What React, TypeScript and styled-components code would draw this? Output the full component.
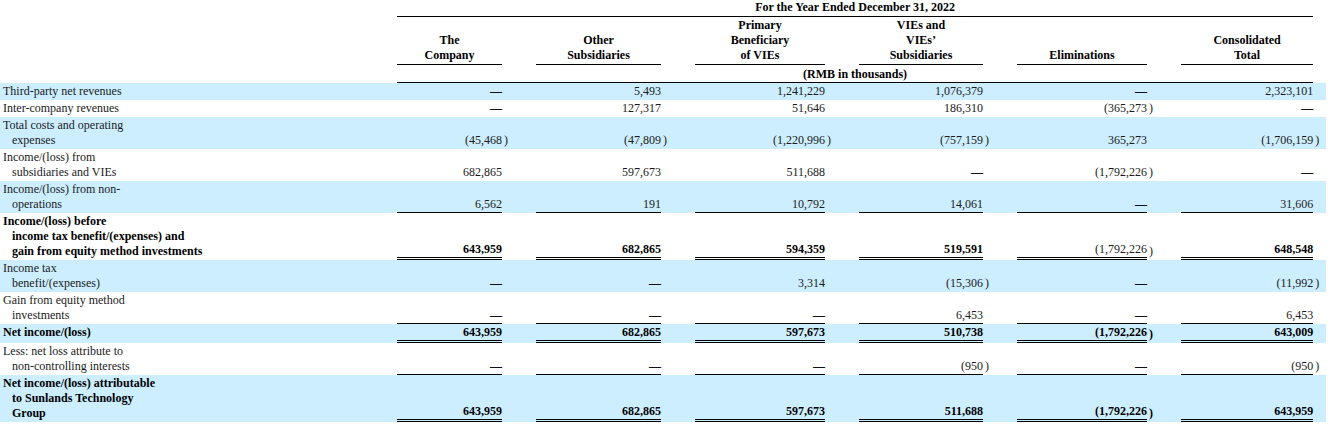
import React from 'react';
import styled, { createGlobalStyle } from 'styled-components';

const GlobalStyle = createGlobalStyle`
  html, body { margin: 0; padding: 0; background: #ffffff; }
  body {
    font-family: "Liberation Serif", "Times New Roman", serif;
    font-size: 12px;
    color: #1a1a1a;
  }
`;

type Rule = 'none' | 'single' | 'double';

interface LineItem {
  label: string[];
  values: string[];
  bold?: boolean;
  plainAt?: number[];
  rule?: Rule;
}

const columns = [
  { title: ['The', 'Company'], width: 105 },
  { title: ['Other', 'Subsidiaries'], width: 125 },
  { title: ['Primary', 'Beneficiary', 'of VIEs'], width: 130 },
  { title: ['VIEs and', 'VIEs\u2019', 'Subsidiaries'], width: 124 },
  { title: ['Eliminations'], width: 130 },
  { title: ['Consolidated', 'Total'], width: 132 },
];

const items: LineItem[] = [
  { label: ['Third-party net revenues'], values: ['—', '5,493', '1,241,229', '1,076,379', '—', '2,323,101'] },
  { label: ['Inter-company revenues'], values: ['—', '127,317', '51,646', '186,310', '(365,273)', '—'] },
  { label: ['Total costs and operating', 'expenses'], values: ['(45,468)', '(47,809)', '(1,220,996)', '(757,159)', '365,273', '(1,706,159)'] },
  { label: ['Income/(loss) from', 'subsidiaries and VIEs'], values: ['682,865', '597,673', '511,688', '—', '(1,792,226)', '—'] },
  { label: ['Income/(loss) from non-', 'operations'], values: ['6,562', '191', '10,792', '14,061', '—', '31,606'], rule: 'single' },
  {
    label: ['Income/(loss) before', 'income tax benefit/(expenses) and', 'gain from equity method investments'],
    values: ['643,959', '682,865', '594,359', '519,591', '(1,792,226)', '648,548'],
    bold: true,
    plainAt: [4],
    rule: 'double',
  },
  { label: ['Income tax', 'benefit/(expenses)'], values: ['—', '—', '3,314', '(15,306)', '—', '(11,992)'] },
  { label: ['Gain from equity method', 'investments'], values: ['—', '—', '—', '6,453', '—', '6,453'], rule: 'single' },
  { label: ['Net income/(loss)'], values: ['643,959', '682,865', '597,673', '510,738', '(1,792,226)', '643,009'], bold: true, rule: 'double' },
  { label: ['Less: net loss attribute to', 'non-controlling interests'], values: ['—', '—', '—', '(950)', '—', '(950)'], rule: 'single' },
  {
    label: ['Net income/(loss) attributable', 'to Sunlands Technology', 'Group'],
    values: ['643,959', '682,865', '597,673', '511,688', '(1,792,226)', '643,959'],
    bold: true,
    rule: 'double',
  },
];

const LABEL_WIDTH = 397;
const GAP_WIDTH = 34;
const TAIL_WIDTH = 13;

const Sheet = styled.table`
  border-collapse: separate;
  border-spacing: 0;
  table-layout: fixed;
  width: 1326px;
  line-height: 15px;
`;

const Row = styled.tr<{ $shaded?: boolean }>`
  background: ${(p) => (p.$shaded ? '#cceeff' : 'transparent')};
`;

const BlankCell = styled.td`
  padding: 0;
`;

const PeriodCell = styled.th`
  font-weight: bold;
  text-align: center;
  padding: 0 0 1px;
  border-bottom: 1px solid #000;
  color: #000;
  white-space: nowrap;
`;

const HeadCell = styled.th`
  font-weight: bold;
  text-align: center;
  vertical-align: bottom;
  padding: 1px 0 1px;
  border-bottom: 1px solid #000;
  color: #000;
  white-space: nowrap;
`;

const UnitCell = styled.th`
  font-weight: bold;
  text-align: center;
  padding: 2px 0 0;
  border-bottom: 1px solid #000;
  color: #000;
`;

const LabelCell = styled.td<{ $bold?: boolean }>`
  vertical-align: top;
  padding: 1px 0 1px 3px;
  font-weight: ${(p) => (p.$bold ? 'bold' : 'normal')};
  color: ${(p) => (p.$bold ? '#000' : '#1a1a1a')};
  white-space: nowrap;
`;

const LabelLine = styled.div<{ $cont?: boolean }>`
  padding-left: ${(p) => (p.$cont ? '9px' : '0')};
`;

const AmountCell = styled.td<{ $bold?: boolean; $rule: Rule }>`
  vertical-align: bottom;
  text-align: right;
  white-space: nowrap;
  padding: 1px 0 ${(p) => (p.$rule === 'none' ? '1px' : '0')};
  font-weight: ${(p) => (p.$bold ? 'bold' : 'normal')};
  color: ${(p) => (p.$bold ? '#000' : '#1a1a1a')};
  border-bottom: ${(p) =>
    p.$rule === 'single' ? '1px solid #000' : p.$rule === 'double' ? '3px double #000' : 'none'};
`;

const Nil = styled.span`
  font-weight: bold;
  color: #111;
`;

const ParenCell = styled.td<{ $bold?: boolean }>`
  vertical-align: bottom;
  text-align: left;
  white-space: nowrap;
  padding: 1px 0 1px 2px;
  font-weight: ${(p) => (p.$bold ? 'bold' : 'normal')};
  color: ${(p) => (p.$bold ? '#000' : '#1a1a1a')};
`;

function splitParen(v: string): [string, string] {
  if (v.endsWith(')')) return [v.slice(0, -1), ')'];
  return [v, ''];
}

export default function App() {
  const spanCount = columns.length * 2 - 1;
  return (
    <>
      <GlobalStyle />
      <Sheet>
        <colgroup>
          <col style={{ width: LABEL_WIDTH }} />
          {columns.map((c, i) => (
            <React.Fragment key={i}>
              <col style={{ width: c.width }} />
              <col style={{ width: i === columns.length - 1 ? TAIL_WIDTH : GAP_WIDTH }} />
            </React.Fragment>
          ))}
        </colgroup>
        <thead>
          <Row>
            <BlankCell />
            <PeriodCell colSpan={spanCount}>For the Year Ended December 31, 2022</PeriodCell>
            <BlankCell />
          </Row>
          <Row>
            <BlankCell />
            {columns.map((c, i) => (
              <React.Fragment key={i}>
                <HeadCell>
                  {c.title.map((t, j) => (
                    <div key={j}>{t}</div>
                  ))}
                </HeadCell>
                <BlankCell />
              </React.Fragment>
            ))}
          </Row>
          <Row>
            <BlankCell />
            <UnitCell colSpan={spanCount}>(RMB in thousands)</UnitCell>
            <BlankCell />
          </Row>
        </thead>
        <tbody>
          {items.map((it, r) => (
            <Row key={r} $shaded={r % 2 === 0}>
              <LabelCell $bold={it.bold}>
                {it.label.map((l, j) => (
                  <LabelLine key={j} $cont={j > 0}>
                    {l}
                  </LabelLine>
                ))}
              </LabelCell>
              {it.values.map((v, i) => {
                const [num, paren] = splitParen(v);
                const bold = it.bold && !(it.plainAt || []).includes(i);
                return (
                  <React.Fragment key={i}>
                    <AmountCell $bold={bold} $rule={it.rule || 'none'}>
                      {num === '—' ? <Nil>{num}</Nil> : num}
                    </AmountCell>
                    <ParenCell $bold={bold}>{paren}</ParenCell>
                  </React.Fragment>
                );
              })}
            </Row>
          ))}
        </tbody>
      </Sheet>
    </>
  );
}
